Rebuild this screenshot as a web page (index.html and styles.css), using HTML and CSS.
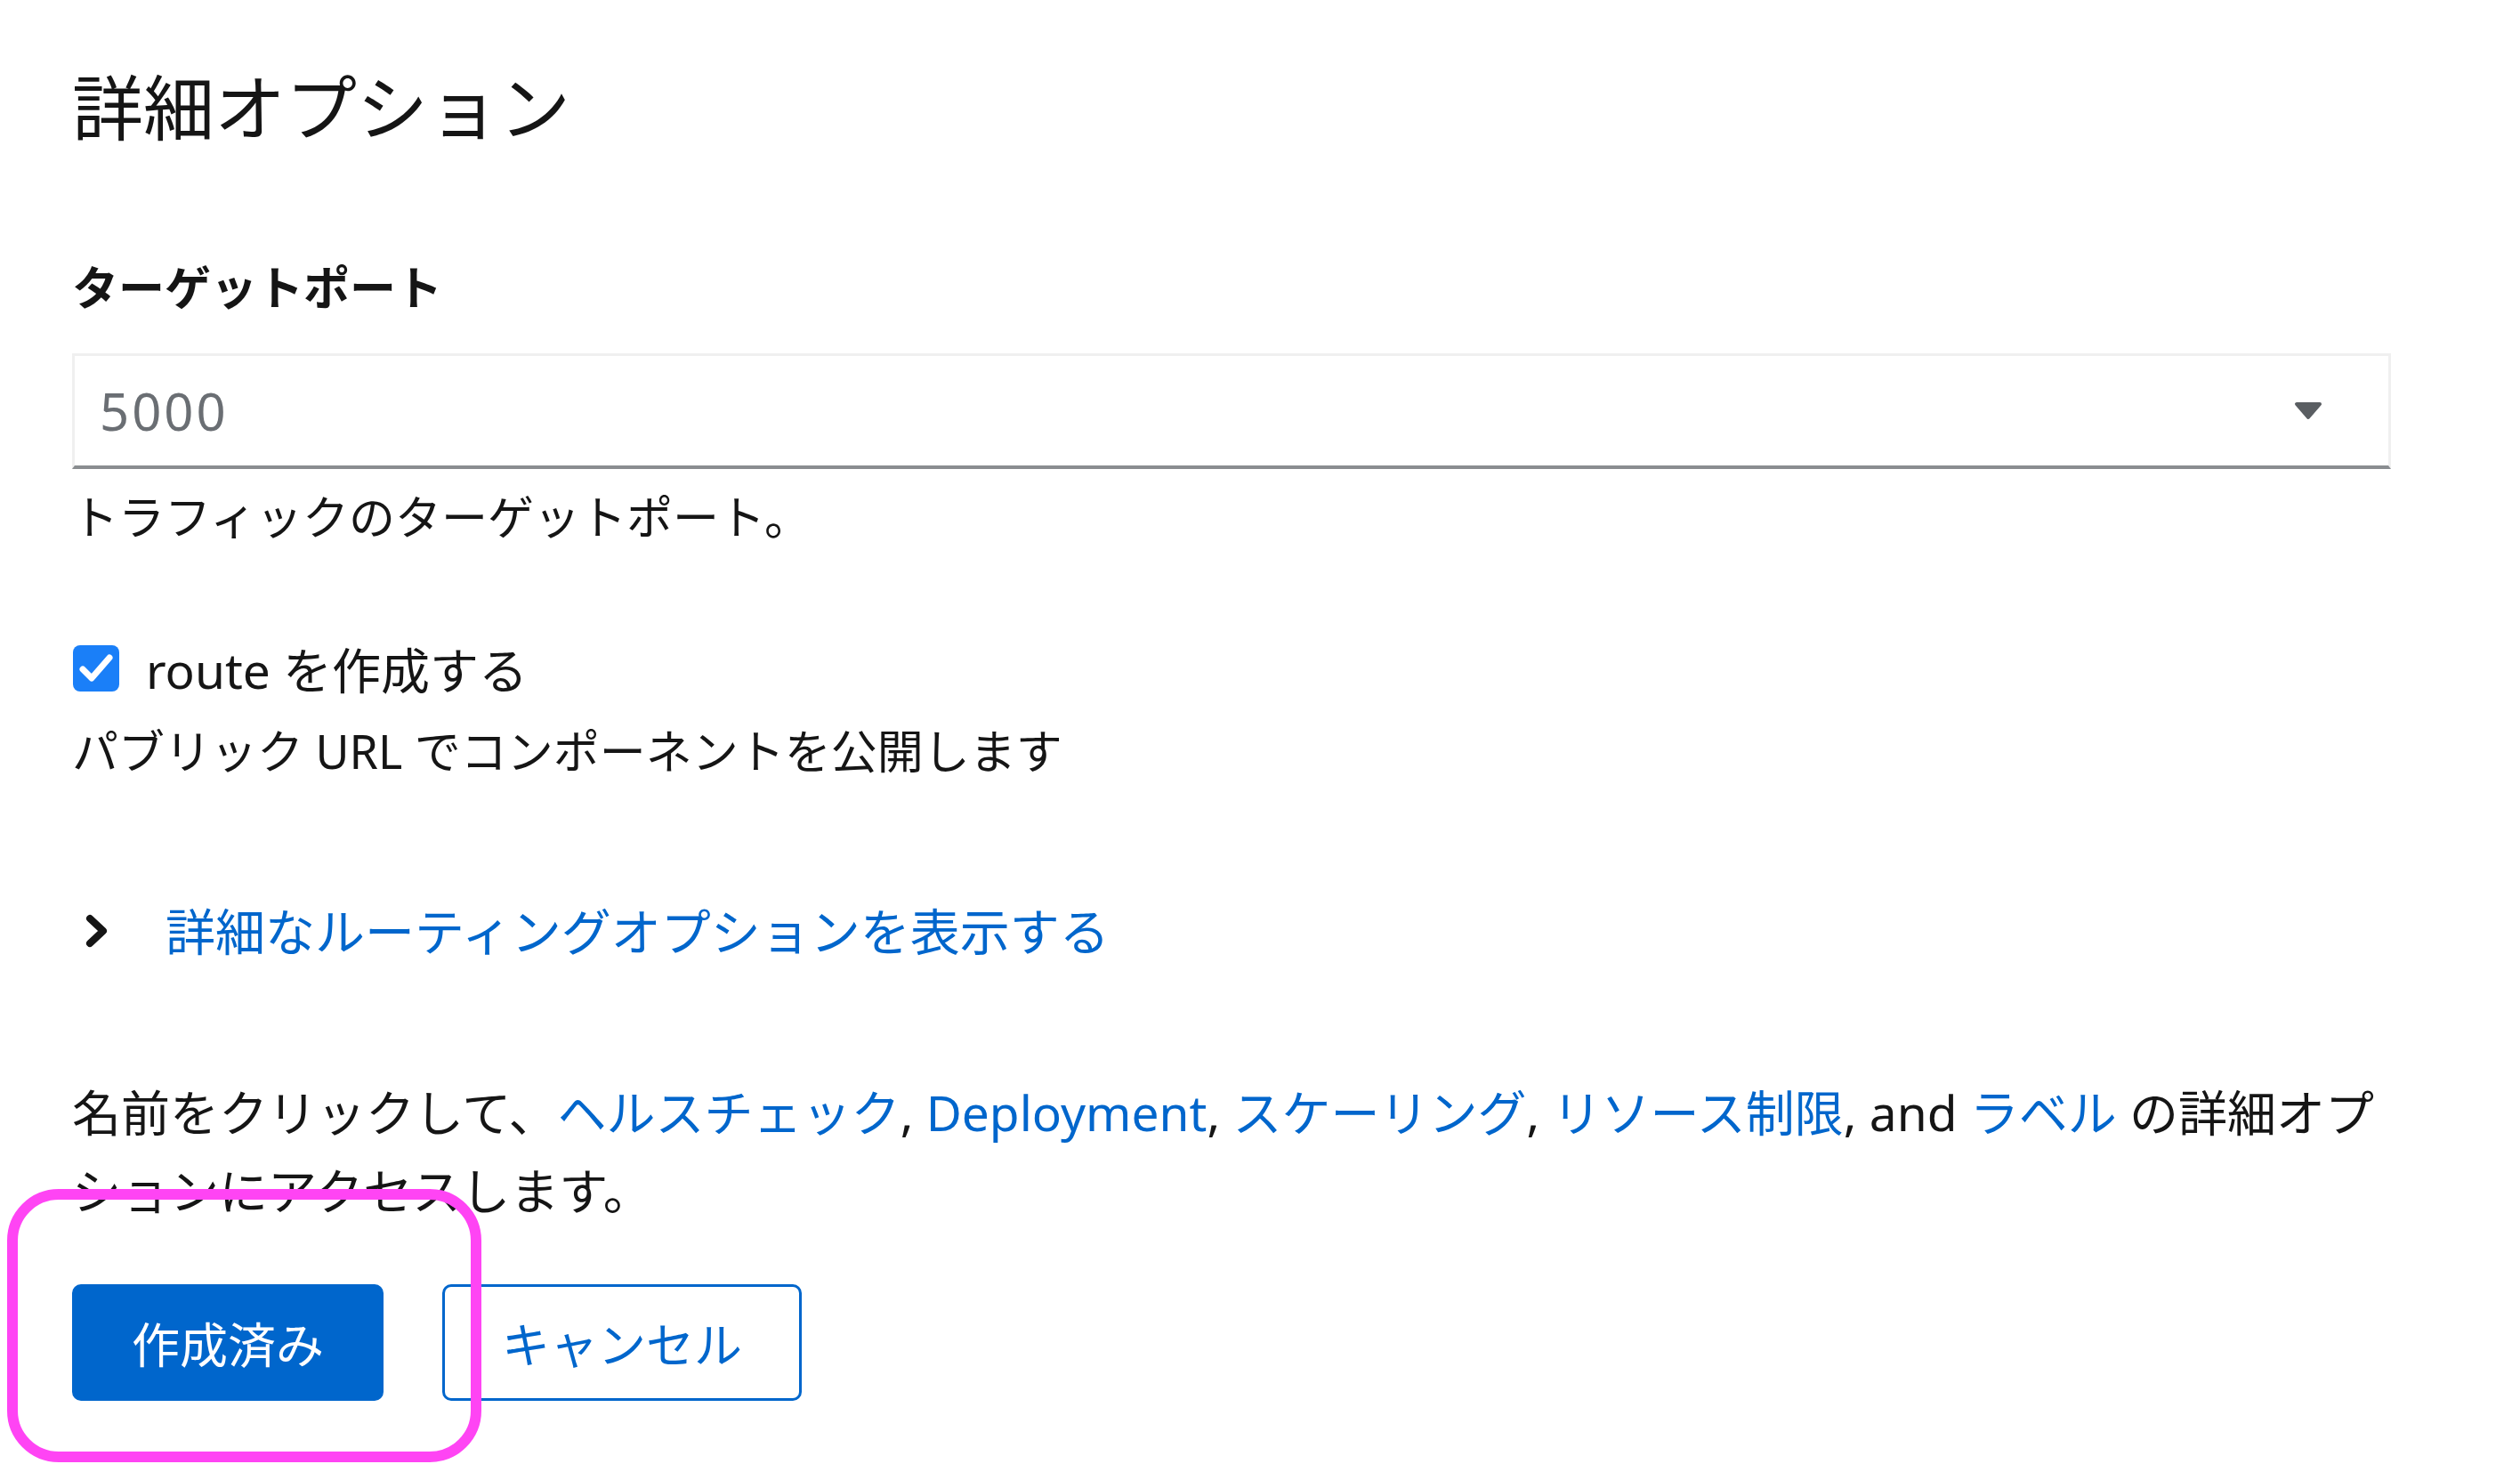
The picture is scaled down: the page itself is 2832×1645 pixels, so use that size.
FILE: index.html
```html
<!DOCTYPE html>
<html lang="ja">
<head>
<meta charset="utf-8">
<title>詳細オプション</title>
<link rel="stylesheet" href="styles.css">
</head>
<body>
<main class="page">
  <h2 class="title">詳細オプション</h2>

  <section class="form-group">
    <label class="label">ターゲットポート</label>
    <div class="select">
      <span class="select-value">5000</span>
      <svg class="caret" width="32" height="21" viewBox="0 0 32 21" aria-hidden="true">
        <path d="M3 3 H29 L16 18 Z" fill="#5a5e62" stroke="#5a5e62" stroke-width="4" stroke-linejoin="round"/>
      </svg>
    </div>
    <div class="helper">トラフィックのターゲットポート。</div>
  </section>

  <section class="check-group">
    <div class="check-row">
      <span class="checkbox">
        <svg width="52" height="52" viewBox="0 0 52 52" aria-hidden="true">
          <polyline points="11,27 21,37 41,14" fill="none" stroke="#ffffff" stroke-width="7" stroke-linecap="round" stroke-linejoin="round"/>
        </svg>
      </span>
      <span class="check-label">route を作成する</span>
    </div>
    <div class="check-desc">パブリック URL でコンポーネントを公開します</div>
  </section>

  <div class="toggle">
    <svg class="chevron" width="28" height="38" viewBox="0 0 28 38" aria-hidden="true">
      <path d="M5 5 L20 19 L5 33" fill="none" stroke="#151515" stroke-width="8" stroke-linecap="round" stroke-linejoin="round"/>
    </svg>
    <a class="toggle-text">詳細なルーティングオプションを表示する</a>
  </div>

  <p class="para">名前をクリックして、<a class="link">ヘルスチェック</a>, <a class="link">Deployment</a>, <a class="link">スケーリング</a>, <a class="link">リソース制限</a>, and <a class="link">ラベル</a> の詳細オプションにアクセスします。</p>

  <div class="actions">
    <button class="btn btn-primary">作成済み</button>
    <button class="btn btn-secondary">キャンセル</button>
  </div>
</main>
<div class="highlight"></div>
</body>
</html>
```

FILE: styles.css
```css
html, body {
  margin: 0;
  padding: 0;
  background: #ffffff;
  overflow: hidden;
}

body {
  position: relative;
  width: 2832px;
  height: 1645px;
  font-family: "Noto Sans", "Noto Sans CJK JP", sans-serif;
  color: #151515;
}

.page {
  padding-left: 81px;
  width: 2606px;
  display: flex;
  flex-direction: column;
}

.title {
  margin: 68px 0 0;
  font-size: 80px;
  line-height: 104px;
  font-weight: 400;
}

.form-group {
  display: flex;
  flex-direction: column;
}

.label {
  margin-top: 116px;
  font-size: 52px;
  line-height: 70px;
  font-weight: 700;
}

.select {
  margin-top: 39px;
  height: 130px;
  box-sizing: border-box;
  border: 3px solid #f0f0f0;
  border-bottom: 4px solid #8a8d90;
  display: flex;
  align-items: center;
  justify-content: space-between;
  padding: 0 74px 0 28px;
}

.select-value {
  font-size: 58px;
  letter-spacing: 3px;
  color: #6a6e73;
  line-height: 1;
}

.caret {
  display: block;
}

.helper {
  margin-top: 19px;
  font-size: 52px;
  line-height: 70px;
}

.check-group {
  display: flex;
  flex-direction: column;
}

.check-row {
  margin-top: 98px;
  height: 72px;
  display: flex;
  align-items: center;
  gap: 30px;
}

.checkbox {
  width: 52px;
  height: 52px;
  border-radius: 8px;
  background: #1a7ff8;
  display: block;
  margin-left: 1px;
  margin-top: 2px;
}

.checkbox svg {
  display: block;
}

.check-label {
  font-size: 55px;
  line-height: 72px;
  padding-top: 6px;
}

.check-desc {
  margin-top: 23px;
  font-size: 52px;
  line-height: 70px;
}

.toggle {
  margin-top: 129px;
  height: 76px;
  display: flex;
  align-items: center;
  gap: 62px;
}

.chevron {
  display: block;
  margin-left: 15px;
}

.toggle-text {
  font-size: 56px;
  line-height: 76px;
  color: #0066cc;
}

.para {
  margin: 122px 0 0;
  font-size: 55px;
  line-height: 88px;
}

.link {
  color: #0066cc;
}

.actions {
  margin-top: 61px;
  display: flex;
  gap: 66px;
}

.btn {
  height: 131px;
  padding: 0 64px;
  font-family: "Noto Sans", "Noto Sans CJK JP", sans-serif;
  font-size: 54px;
  border-radius: 10px;
  box-sizing: border-box;
  cursor: pointer;
}

.btn-primary {
  background: #0066cc;
  color: #ffffff;
  border: 3px solid #0066cc;
}

.btn-secondary {
  background: #ffffff;
  color: #0066cc;
  border: 3px solid #0066cc;
}

.highlight {
  position: absolute;
  left: 8px;
  top: 1336px;
  width: 533px;
  height: 307px;
  box-sizing: border-box;
  border: 12px solid #ff44f4;
  border-radius: 58px;
  pointer-events: none;
}
```
